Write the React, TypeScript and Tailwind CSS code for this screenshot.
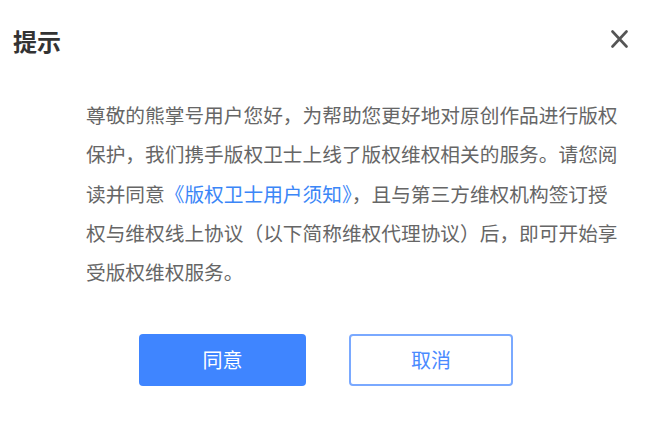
export default function App() {
  const font = { fontFamily: '"Noto Sans CJK SC", "Noto Sans", sans-serif' };

  return (
    <div className="w-[662px] h-[434px] bg-white overflow-hidden" style={font}>
      {/* 头部 */}
      <div className="flex items-center justify-between h-[82px] pl-[13px] pr-[34px]">
        <h2 className="text-[24px] leading-none font-bold text-[#333]">提示</h2>
        <button className="text-[#555] -mt-[5px]">
          <svg width="17" height="18" viewBox="0 0 17 18" fill="none">
            <path
              d="M1.5 1.5L15.5 16.5M15.5 1.5L1.5 16.5"
              stroke="currentColor"
              strokeWidth="2.6"
              strokeLinecap="round"
            />
          </svg>
        </button>
      </div>

      {/* 内容 */}
      <p
        className="
          ml-[86px]
          w-[536px]
          mt-[13px]
          text-[19.7px]
          leading-[39.3px]
          text-[#666]
        "
      >
        尊敬的熊掌号用户您好，为帮助您更好地对原创作品进行版权保护，我们携手版权卫士上线了版权维权相关的服务。请您阅读并同意
        <a className="text-[#3b86f7]">《版权卫士用户须知》</a>
        ，且与第三方维权机构签订授权与维权线上协议（以下简称维权代理协议）后，即可开始享受版权维权服务。
      </p>

      {/* 按钮 */}
      <div className="flex gap-[43px] ml-[139px] mt-[43px]">
        <button className="w-[167px] h-[52px] rounded-[4px] bg-[#3f85ff] text-white text-[20px]">
          同意
        </button>
        <button className="w-[164px] h-[52px] rounded-[4px] border-2 border-[#7aa9ff] bg-white text-[#4a8aff] text-[20px]">
          取消
        </button>
      </div>
    </div>
  );
}
